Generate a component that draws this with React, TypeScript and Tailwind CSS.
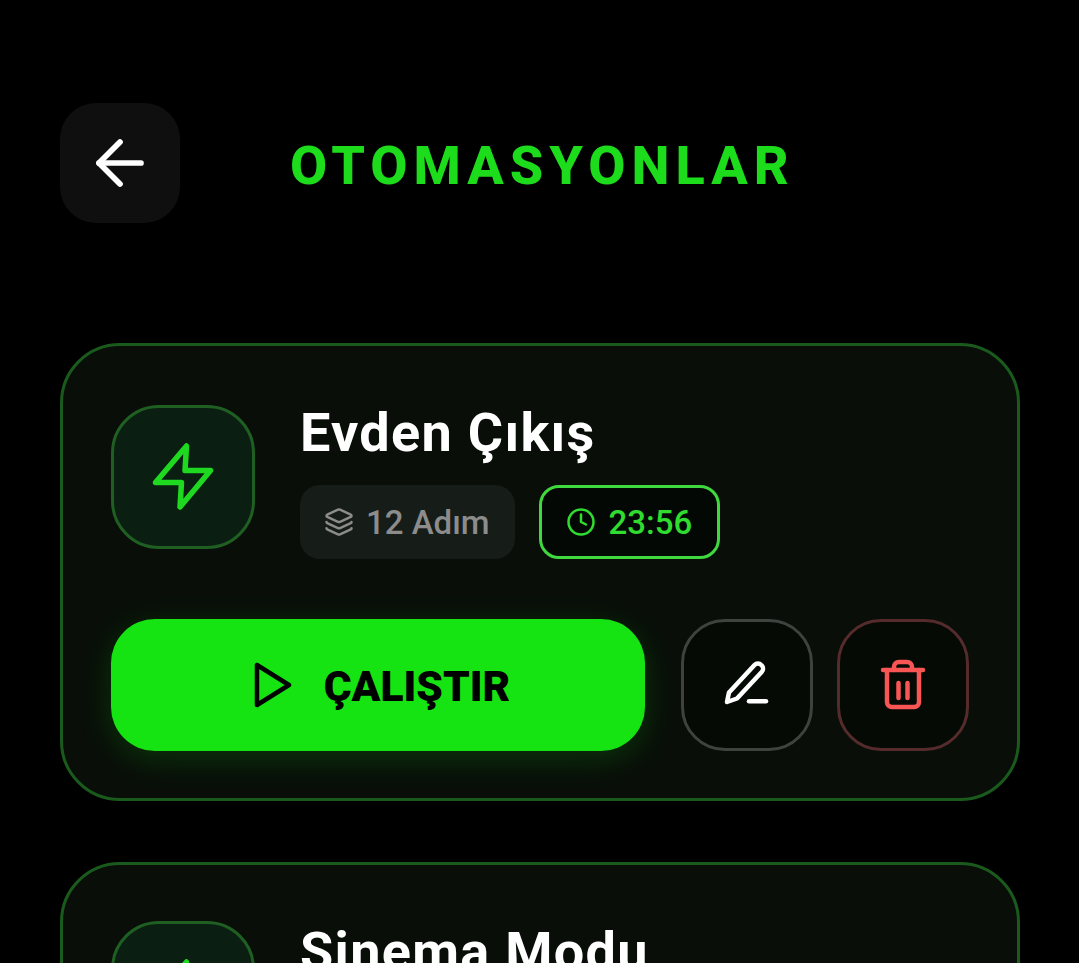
import React from 'react'
import { ArrowLeft, Clock, Layers } from 'lucide-react'

const ZapIcon = () => (
  <svg width="66" height="72" viewBox="0 0 66 72" fill="none" stroke="#1fd820" strokeWidth="5.500" strokeLinejoin="round" strokeLinecap="round">
    <path d="M36.500 5 35 29.500h25.500L30 66l1.500-24.500H5.500z" />
  </svg>
)

const PlayIcon = () => (
  <svg width="38" height="46" viewBox="0 0 38 46" fill="none" stroke="#000" strokeWidth="4.500" strokeLinejoin="round">
    <path d="M3 3v40l32-20z" />
  </svg>
)

const EditIcon = () => (
  <svg width="56" height="56" viewBox="0 0 56 56" fill="none" stroke="#fff" strokeWidth="4.500" strokeLinejoin="round" strokeLinecap="round">
    <path d="M8 45l2-9.500L35.500 8a4.700 4.700 0 0 1 6.800 0l.4.4a4.700 4.700 0 0 1 0 6.600L18 41.500z" />
    <path d="M30 44.300h17" />
  </svg>
)

const TrashIcon = () => (
  <svg width="48" height="52" viewBox="0 0 48 52" fill="none" stroke="#f85555" strokeWidth="4.500" strokeLinejoin="round" strokeLinecap="round">
    <path d="M4 11h40" />
    <path d="M8 11v32a5 5 0 0 0 5 5h22a5 5 0 0 0 5-5V11" />
    <path d="M15 11V8a5 5 0 0 1 5-5h8a5 5 0 0 1 5 5v3" />
    <path d="M19.500 24v15M28.500 24v15" />
  </svg>
)

const IconTile = () => (
  <div className="flex h-[144px] w-[144px] shrink-0 items-center justify-center rounded-[48px] border-[3px] border-[#1f5f22] bg-[#0a1f12]">
    <ZapIcon />
  </div>
)

const Card = ({ title, children }: { title: string; children?: React.ReactNode }) => (
  <div className="shrink-0 rounded-[60px] border-[3px] border-[#1a5a1c] bg-[#090e09] pl-[48px] pr-[48px] pb-[47px] pt-[49px]">
    {children}
    {!children && (
      <div className="flex items-center gap-[45px]">
        <IconTile />
        <div className="h-[158px]">
          <h2 className="pb-[4px] text-[54px] leading-[76px] font-bold tracking-[1.300px] text-white">{title}</h2>
        </div>
      </div>
    )}
  </div>
)

export default function App() {
  return (
    <div className="h-screen overflow-hidden bg-black pl-[60px] pr-[59px] pt-[103px] font-['Roboto',sans-serif]">
      <header className="flex items-center gap-[110px]">
        <button className="flex h-[120px] w-[120px] items-center justify-center rounded-[36px] bg-[#0f0f0f] text-white">
          <ArrowLeft size={72} strokeWidth={1.9} />
        </button>
        <h1 className="pt-[4px] text-[54px] font-extrabold tracking-[6px] text-[#1cdc1c]">OTOMASYONLAR</h1>
      </header>

      <main className="mt-[120px] flex flex-col gap-[61px]">
        <Card title="Evden Çıkış">
          <div className="flex items-center gap-[45px]">
            <IconTile />
            <div>
              <h2 className="pb-[4px] text-[54px] leading-[76px] font-bold tracking-[1.300px] text-white">Evden Çıkış</h2>
              <div className="mt-[10px] flex items-center gap-[24px]">
                <div className="flex h-[74px] items-center gap-[12px] rounded-[20px] bg-[#161c18] pl-[24px] pr-[25px] text-[33px] font-medium text-[#8c8c8c]">
                  <Layers size={30} strokeWidth={2} />
                  <span className="pt-[2px]">12 Adım</span>
                </div>
                <div className="flex h-[74px] items-center gap-[13px] rounded-[20px] border-[3px] border-[#3fd83f] bg-[#040804] pl-[24px] pr-[25px] text-[33px] font-medium text-[#2fdc2f]">
                  <Clock size={30} strokeWidth={2} />
                  <span className="pt-[2px]">23:56</span>
                </div>
              </div>
            </div>
          </div>

          <div className="mt-[60px] flex items-center gap-[24px]">
            <button className="mr-[12px] flex h-[132px] flex-1 items-center justify-center gap-[32px] rounded-[44px] bg-[#16e312] pl-[8px] text-[42.500px] font-black text-black shadow-[0_8px_32px_rgba(22,227,18,0.18)]">
              <PlayIcon />
              <span className="pt-[4px]">ÇALIŞTIR</span>
            </button>
            <button className="flex h-[132px] w-[132px] items-center justify-center rounded-[44px] border-[3px] border-[#3f423f] bg-[#050a05]">
              <EditIcon />
            </button>
            <button className="flex h-[132px] w-[132px] items-center justify-center rounded-[44px] border-[3px] border-[#552b2b] bg-[#050a05]">
              <TrashIcon />
            </button>
          </div>
        </Card>

        <Card title="Sinema Modu" />
      </main>
    </div>
  )
}
